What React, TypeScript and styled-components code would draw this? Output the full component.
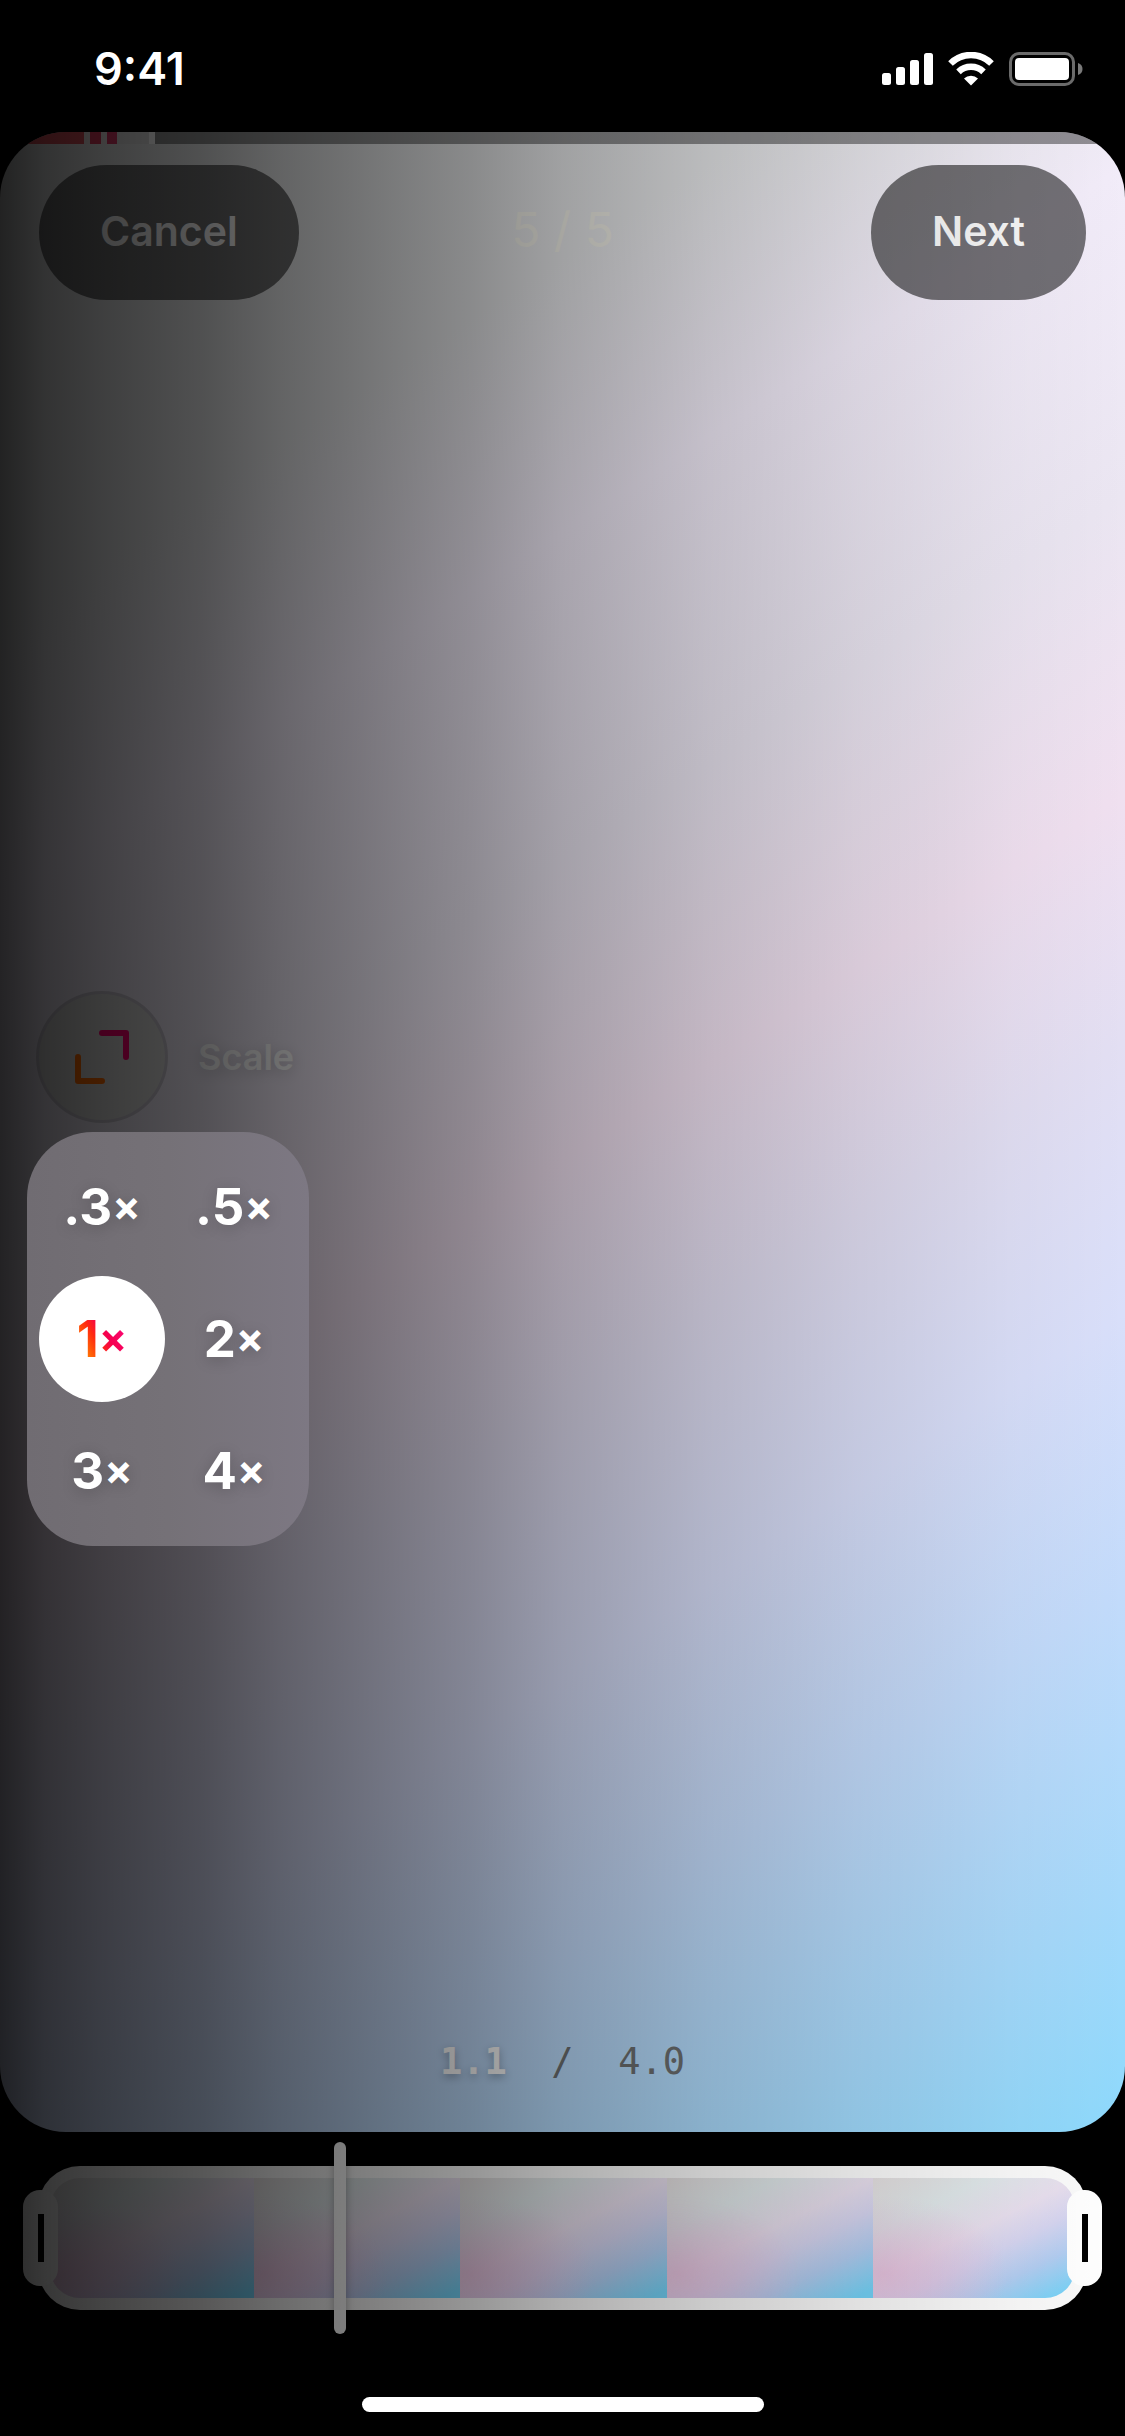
import React, { useState } from "react";
import styled, { createGlobalStyle } from "styled-components";

const GlobalStyle = createGlobalStyle`
  * { box-sizing: border-box; }
  body {
    margin: 0;
    background: #000;
    font-family: Inter, "Liberation Sans", sans-serif;
    -webkit-font-smoothing: antialiased;
  }
`;

const Screen = styled.div`
  display: flex;
  flex-direction: column;
  min-height: 100vh;
  background: #000;
  color: #fff;
`;

const StatusBar = styled.header`
  display: flex;
  align-items: center;
  justify-content: space-between;
  height: 132px;
  padding: 6px 42px 0 94px;
`;

const Clock = styled.time`
  font-size: 45px;
  line-height: 54px;
  font-weight: 600;
`;

const StatusIcons = styled.div`
  display: flex;
  align-items: center;
  gap: 15px;
`;

const Editor = styled.main`
  position: relative;
  display: flex;
  flex: 1;
  flex-direction: column;
`;

const Shade = styled.div`
  position: absolute;
  inset: 0 0 -36px;
  z-index: 1;
  pointer-events: none;
  background: linear-gradient(
    to right,
    rgba(0, 0, 0, 0.85) 0%,
    rgba(0, 0, 0, 0.78) 4%,
    rgba(0, 0, 0, 0.73) 9%,
    rgba(0, 0, 0, 0.65) 18%,
    rgba(0, 0, 0, 0.57) 25%,
    rgba(0, 0, 0, 0.4) 42%,
    rgba(0, 0, 0, 0.3) 50%,
    rgba(0, 0, 0, 0.19) 63%,
    rgba(0, 0, 0, 0.1) 76%,
    rgba(0, 0, 0, 0.03) 90%,
    rgba(0, 0, 0, 0) 100%
  );
`;

const Preview = styled.section`
  display: flex;
  flex: 1;
  flex-direction: column;
  overflow: hidden;
  border-radius: 66px;
  background: linear-gradient(
    147deg,
    #e4e6e6 0%,
    #e6e7e9 18%,
    #f2ecf9 28%,
    #ebe6f2 40%,
    #f0e0f0 51%,
    #e3dff3 60%,
    #d9dffa 70%,
    #c3dbfb 80%,
    #a6d9fb 91%,
    #8cd9fc 100%
  );
`;

const Progress = styled.div`
  display: flex;
  height: 12px;
  background: rgba(0, 0, 0, 0.4);
`;

const Segment = styled.span<{ $width: number; $color: string }>`
  width: ${(p) => p.$width}px;
  background: ${(p) => p.$color};
`;

const Toolbar = styled.div`
  display: grid;
  grid-template-columns: 1fr auto 1fr;
  align-items: center;
  padding: 21px 39px 0;
`;

const PillButton = styled.button<{ $end?: boolean }>`
  justify-self: ${(p) => (p.$end ? "end" : "start")};
  height: 135px;
  padding: 0 61px 3px;
  border: 0;
  border-radius: 68px;
  background: rgba(0, 0, 0, 0.53);
  color: #f6f6f6;
  font-family: inherit;
  font-size: 41px;
  font-weight: 600;
`;

const Counter = styled.span`
  padding-bottom: 6px;
  color: #efeee6;
  font-size: 48px;
  line-height: 60px;
  font-weight: 400;
`;

const Tools = styled.div`
  display: flex;
  flex: 1;
  flex-direction: column;
  justify-content: flex-end;
  align-items: flex-start;
  gap: 12px;
  padding: 0 27px 494px;
`;

const ToolButton = styled.button`
  display: flex;
  align-items: center;
  gap: 33px;
  padding: 0 12px;
  border: 0;
  background: none;
  color: #fff;
  font-family: inherit;
  font-size: 36px;
  font-weight: 600;
  text-shadow: 0 3px 15px rgba(0, 0, 0, 0.2);
`;

const ToolIcon = styled.span`
  display: flex;
  align-items: center;
  justify-content: center;
  width: 126px;
  height: 126px;
  border-radius: 50%;
  background: #d8d8d7;
  box-shadow: 0 0 0 3px rgba(0, 0, 0, 0.15);
`;

const ScalePanel = styled.fieldset`
  position: relative;
  z-index: 2;
  display: grid;
  grid-template-columns: repeat(2, 126px);
  grid-auto-rows: 126px;
  gap: 6px;
  margin: 0;
  padding: 12px;
  border: 0;
  border-radius: 66px;
  background: linear-gradient(to right, #706c72, #757177 50%, #7d7883);
`;

const HiddenRadio = styled.input`
  position: absolute;
  opacity: 0;
  pointer-events: none;
`;

const ScaleOption = styled.label<{ $active: boolean }>`
  display: flex;
  align-items: center;
  justify-content: center;
  border-radius: 50%;
  background: ${(p) => (p.$active ? "#fff" : "transparent")};
  cursor: pointer;
`;

const ScaleText = styled.span<{ $active: boolean }>`
  font-size: 51px;
  line-height: 60px;
  font-weight: 700;
  ${(p) =>
    p.$active
      ? `
    background: linear-gradient(60deg, #ff8a00 15%, #ff2a10 42%, #f5004f 58%, #ff0a8a 100%);
    -webkit-background-clip: text;
    background-clip: text;
    color: transparent;`
      : `text-shadow: 0 3px 15px rgba(0, 0, 0, 0.2);`}
`;

const Times = styled.span`
  font-size: 42px;
  line-height: 42px;
  font-weight: 700;
  vertical-align: 4px;
`;

const Timecode = styled.p`
  margin: 0;
  padding-bottom: 48px;
  color: #6b6e6f;
  font-family: "DejaVu Sans Mono", monospace;
  font-size: 37px;
  line-height: 44px;
  text-align: center;
  white-space: pre;
`;

const Current = styled.b`
  color: #fff;
  text-shadow: 0 3px 9px rgba(0, 0, 0, 0.3);
`;

const Timeline = styled.section`
  padding: 34px 38px 0;
`;

const Track = styled.div`
  position: relative;
  height: 144px;
  padding: 12px;
  border-radius: 42px;
  background: #fafafa;
`;

const Clip = styled.div`
  height: 100%;
  overflow: hidden;
  border-radius: 30px;
`;

const Frames = styled.div`
  display: grid;
  grid-template-columns: repeat(5, 1fr);
  height: 100%;
  margin: 0 -5px 0 -3px;
`;

const Frame = styled.div`
  background:
    radial-gradient(ellipse 60% 65% at 5% 80%, rgba(228, 184, 216, 0.75), rgba(228, 184, 216, 0)),
    linear-gradient(154deg, #e4dfe0 0%, #e0e8ea 25%, #e8dfee 46%, #d6d5f0 60%, #b2cdf1 76%, #74d2f7 96%);
`;

const Handle = styled.button<{ $side: "left" | "right" }>`
  position: absolute;
  top: 24px;
  ${(p) => p.$side}: -15px;
  display: flex;
  align-items: center;
  justify-content: center;
  width: 35px;
  height: 96px;
  padding: 0;
  border: 0;
  border-radius: 17px;
  background: #fff;
`;

const Grip = styled.span`
  width: 6px;
  height: 48px;
  background: #000;
`;

const Playhead = styled.input`
  position: absolute;
  top: -24px;
  left: 12px;
  width: calc(100% - 24px);
  height: 192px;
  margin: 0;
  appearance: none;
  background: transparent;
  pointer-events: none;

  &::-webkit-slider-thumb {
    appearance: none;
    width: 12px;
    height: 192px;
    border-radius: 6px;
    background: #fff;
    box-shadow: 0 0 9px rgba(0, 0, 0, 0.3);
    pointer-events: auto;
  }
`;

const HomeArea = styled.footer`
  display: flex;
  justify-content: center;
  padding: 87px 0 24px;
`;

const HomeIndicator = styled.div`
  width: 402px;
  height: 15px;
  border-radius: 8px;
  background: #fff;
`;

const SignalIcon = () => (
  <svg width="51" height="34" viewBox="0 0 51 34" fill="#fff" aria-hidden="true">
    <rect x="0" y="21" width="9" height="12" rx="2.5" />
    <rect x="14" y="15" width="9" height="18" rx="2.5" />
    <rect x="28" y="8" width="9" height="25" rx="2.5" />
    <rect x="42" y="1" width="9" height="32" rx="2.5" />
  </svg>
);

const WifiIcon = () => (
  <svg width="46" height="34" viewBox="0 0 46 34" aria-hidden="true">
    <path d="M2.5 11.5A29 29 0 0 1 43.500 11.500" fill="none" stroke="#fff" strokeWidth="6.500" />
    <path d="M10.500 19.800A18 18 0 0 1 35.500 19.800" fill="none" stroke="#fff" strokeWidth="6.500" />
    <path d="M16 26.500A10 10 0 0 1 30 26.500L23 33.500Z" fill="#fff" />
  </svg>
);

const BatteryIcon = () => (
  <svg width="74" height="34" viewBox="0 0 74 34" aria-hidden="true">
    <rect x="1.500" y="1.500" width="63" height="31" rx="8.500" fill="none" stroke="#6b6b6b" strokeWidth="3" />
    <rect x="6" y="6" width="54" height="22" rx="4" fill="#fff" />
    <path d="M69 11c3 1 4.500 3 4.500 6s-1.500 5-4.500 6z" fill="#7a7a7a" />
  </svg>
);

const ScaleIcon = () => (
  <svg width="54" height="54" viewBox="0 0 54 54" fill="none" strokeWidth="6" strokeLinecap="round" strokeLinejoin="round" aria-hidden="true">
    <path d="M27 3H51V27" stroke="#ff0070" />
    <path d="M3 27V51H27" stroke="#ff6a00" />
  </svg>
);

const scales = [".3", ".5", "1", "2", "3", "4"];
const duration = 4;

const progressSegments = [
  { width: 84, color: "#d8505a" },
  { width: 6, color: "#e6dede" },
  { width: 11, color: "#d8385a" },
  { width: 6, color: "#e6dede" },
  { width: 10, color: "#d83866" },
  { width: 32, color: "#dcdcdc" },
  { width: 6, color: "#fff" },
];

export default function App() {
  const [scale, setScale] = useState("1");
  const [position, setPosition] = useState(1.12);

  return (
    <Screen>
      <GlobalStyle />
      <StatusBar>
        <Clock>9:41</Clock>
        <StatusIcons>
          <SignalIcon />
          <WifiIcon />
          <BatteryIcon />
        </StatusIcons>
      </StatusBar>
      <Editor>
        <Preview>
          <Progress>
            {progressSegments.map((s, i) => (
              <Segment key={i} $width={s.width} $color={s.color} />
            ))}
          </Progress>
          <Toolbar>
            <PillButton type="button">Cancel</PillButton>
            <Counter>5 / 5</Counter>
            <PillButton type="button" $end>
              Next
            </PillButton>
          </Toolbar>
          <Tools>
            <ToolButton type="button">
              <ToolIcon>
                <ScaleIcon />
              </ToolIcon>
              Scale
            </ToolButton>
            <ScalePanel aria-label="Scale">
              {scales.map((value) => (
                <ScaleOption key={value} $active={value === scale}>
                  <HiddenRadio
                    type="radio"
                    name="scale"
                    checked={value === scale}
                    onChange={() => setScale(value)}
                  />
                  <ScaleText $active={value === scale}>
                    {value}
                    <Times>×</Times>
                  </ScaleText>
                </ScaleOption>
              ))}
            </ScalePanel>
          </Tools>
          <Timecode>
            <Current>{position.toFixed(1)}</Current>
            {"  /  "}
            {duration.toFixed(1)}
          </Timecode>
        </Preview>
        <Timeline>
          <Track>
            <Clip>
              <Frames>
                {Array.from({ length: 5 }, (_, i) => (
                  <Frame key={i} />
                ))}
              </Frames>
            </Clip>
            <Handle type="button" $side="left" aria-label="Trim start">
              <Grip />
            </Handle>
            <Handle type="button" $side="right" aria-label="Trim end">
              <Grip />
            </Handle>
            <Playhead
              type="range"
              aria-label="Playhead"
              min={0}
              max={duration}
              step={0.01}
              value={position}
              onChange={(e) => setPosition(Number(e.target.value))}
            />
          </Track>
        </Timeline>
        <Shade />
      </Editor>
      <HomeArea>
        <HomeIndicator />
      </HomeArea>
    </Screen>
  );
}
